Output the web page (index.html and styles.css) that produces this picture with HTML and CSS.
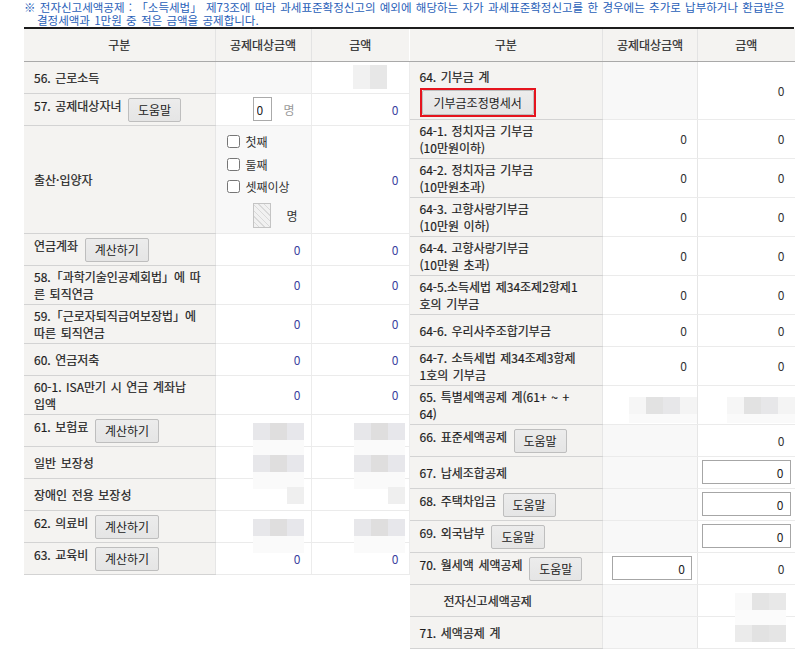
FILE: index.html
```html
<!DOCTYPE html>
<html lang="ko">
<head>
<meta charset="utf-8">
<title>세액공제</title>
<link rel="stylesheet" href="styles.css">
</head>
<body>
<p class="note">※ 전자신고세액공제 : 「소득세법」 제73조에 따라 과세표준확정신고의 예외에 해당하는 자가 과세표준확정신고를 한 경우에는 추가로 납부하거나 환급받은<br>결정세액과 1만원 중 적은 금액을 공제합니다.</p>
<div class="tables">
  <table class="grid left">
    <colgroup><col class="c1"><col class="c2"><col class="c3"></colgroup>
    <thead>
      <tr><th>구분</th><th>공제대상금액</th><th>금액</th></tr>
    </thead>
    <tbody>
      <tr><td class="lb">56. 근로소득</td><td class="v off"></td><td class="v pz-a"><span class="mz mz-a"></span></td></tr>
      <tr><td class="lb">57. 공제대상자녀 <button class="btn">도움말</button></td><td class="v cnt"><input class="num" value="0"><span class="unit">명</span></td><td class="v n">0</td></tr>
      <tr>
        <td class="lb">출산·입양자</td>
        <td class="v off chk">
          <label class="ck"><input type="checkbox">첫째</label>
          <label class="ck ck2"><input type="checkbox">둘째</label>
          <label class="ck"><input type="checkbox">셋째이상</label>
          <div class="hatch-row"><span class="hatch"></span><span class="unit2">명</span></div>
        </td>
        <td class="v n">0</td>
      </tr>
      <tr><td class="lb">연금계좌 <button class="btn">계산하기</button></td><td class="v n">0</td><td class="v n">0</td></tr>
      <tr><td class="lb">58.「과학기술인공제회법」에 따<br>른 퇴직연금</td><td class="v n">0</td><td class="v n">0</td></tr>
      <tr><td class="lb">59.「근로자퇴직급여보장법」에<br>따른 퇴직연금</td><td class="v n">0</td><td class="v n">0</td></tr>
      <tr><td class="lb">60. 연금저축</td><td class="v n">0</td><td class="v n">0</td></tr>
      <tr><td class="lb">60-1. ISA만기 시 연금 계좌납<br>입액</td><td class="v n">0</td><td class="v n">0</td></tr>
      <tr><td class="lb">61. 보험료 <button class="btn">계산하기</button></td><td class="v pz-b"><span class="mz mz-b"></span></td><td class="v pz-c"><span class="mz mz-b"></span></td></tr>
      <tr><td class="lb">일반 보장성</td><td class="v pz-b"><span class="mz mz-b"></span></td><td class="v pz-c"><span class="mz mz-b"></span></td></tr>
      <tr><td class="lb">장애인 전용 보장성</td><td class="v pz-b"><span class="mz mz-c"></span></td><td class="v pz-c"><span class="mz mz-c"></span></td></tr>
      <tr><td class="lb">62. 의료비 <button class="btn">계산하기</button></td><td class="v pz-b"><span class="mz mz-b"></span></td><td class="v pz-c"><span class="mz mz-b"></span></td></tr>
      <tr><td class="lb">63. 교육비 <button class="btn">계산하기</button></td><td class="v n">0</td><td class="v n">0</td></tr>
    </tbody>
  </table>

  <table class="grid right">
    <colgroup><col class="r1"><col class="r2"><col class="r3"></colgroup>
    <thead>
      <tr><th>구분</th><th>공제대상금액</th><th>금액</th></tr>
    </thead>
    <tbody>
      <tr><td class="lb lb-top">64. 기부금 계<br><span class="mark"><button class="btn btn-in">기부금조정명세서</button></span></td><td class="v off"></td><td class="v">0</td></tr>
      <tr><td class="lb">64-1. 정치자금 기부금<br>(10만원이하)</td><td class="v">0</td><td class="v">0</td></tr>
      <tr><td class="lb">64-2. 정치자금 기부금<br>(10만원초과)</td><td class="v">0</td><td class="v">0</td></tr>
      <tr><td class="lb">64-3. 고향사랑기부금<br>(10만원 이하)</td><td class="v">0</td><td class="v">0</td></tr>
      <tr><td class="lb">64-4. 고향사랑기부금<br>(10만원 초과)</td><td class="v">0</td><td class="v">0</td></tr>
      <tr><td class="lb">64-5.소득세법 제34조제2항제1<br>호의 기부금</td><td class="v">0</td><td class="v">0</td></tr>
      <tr><td class="lb">64-6. 우리사주조합기부금</td><td class="v">0</td><td class="v">0</td></tr>
      <tr><td class="lb">64-7. 소득세법 제34조제3항제<br>1호의 기부금</td><td class="v">0</td><td class="v">0</td></tr>
      <tr><td class="lb">65. 특별세액공제 계(61+ ~ +<br>64)</td><td class="v pz-0"><span class="mz mz-d"></span></td><td class="v pz-0"><span class="mz mz-d"></span></td></tr>
      <tr><td class="lb">66. 표준세액공제 <button class="btn">도움말</button></td><td class="v off"></td><td class="v">0</td></tr>
      <tr><td class="lb">67. 납세조합공제</td><td class="v off"></td><td class="v fld"><input class="amt" value="0"></td></tr>
      <tr><td class="lb">68. 주택차입금 <button class="btn">도움말</button></td><td class="v off"></td><td class="v fld"><input class="amt" value="0"></td></tr>
      <tr><td class="lb">69. 외국납부 <button class="btn">도움말</button></td><td class="v off"></td><td class="v fld"><input class="amt" value="0"></td></tr>
      <tr><td class="lb">70. 월세액 세액공제 <button class="btn">도움말</button></td><td class="v fld2"><input class="amt amt-s" value="0"></td><td class="v">0</td></tr>
      <tr><td class="lb sub">전자신고세액공제</td><td class="v off"></td><td class="v pz-e"><span class="mz mz-e"></span></td></tr>
      <tr><td class="lb">71. 세액공제 계</td><td class="v off"></td><td class="v pz-e"><span class="mz mz-f"></span></td></tr>
    </tbody>
  </table>
</div>
</body>
</html>
```

FILE: styles.css
```css
* { box-sizing: border-box; }

body {
  margin: 0;
  padding: 0 15px 0 24px;
  font-family: "Noto Sans CJK KR", "Noto Sans", sans-serif;
  font-size: 12px;
  color: #222;
  background: #fff;
}

.note {
  margin: 0;
  height: 27px;
  padding-top: 1px;
  font-size: 11.5px;
  line-height: 13px;
  word-spacing: 1.1px;
  color: #2860b8;
  padding-left: 13px;
  text-indent: -13px;
  white-space: nowrap;
}

.tables {
  display: flex;
  align-items: flex-start;
  width: 770px;
  border-top: 2px solid #1c1c1c;
}

.grid {
  width: 385px;
  border-collapse: collapse;
  table-layout: fixed;
  word-spacing: 1.2px;
}

.c1 { width: 191px; }
.c2 { width: 96px; }
.c3 { width: 98px; }
.r1 { width: 193px; }
.r2 { width: 95px; }
.r3 { width: 97px; }

.grid th {
  height: 32px;
  padding: 0;
  background: #f4f3f1;
  font-weight: normal;
  color: #2a2a2a;
  -webkit-text-stroke: 0.2px #2a2a2a;
  border-bottom: 1px solid #a9a9a9;
  border-left: 1px solid #e3e3e3;
}
.grid th:first-child { border-left: none; }

.grid tbody tr { height: 32px; }

.grid td {
  padding: 2px 10px;
  line-height: 17px;
  vertical-align: middle;
  white-space: nowrap;
}

.lb {
  background: #f4f3f1;
  border-bottom: 1px solid #d3d3d3;
  text-align: left;
  color: #1e1e1e;
  -webkit-text-stroke: 0.2px #1e1e1e;
}
.lb.sub { padding-left: 34px; }
.grid td.lb-top { padding: 6px 10px 2px; }

.v {
  text-align: right;
  background: #fff;
  border-bottom: 1px solid #ebebeb;
  border-left: 1px solid #e6e6e6;
  color: #333;
}
.left .v { border-right: 1px solid #ececec; }
.v.n { color: #3a3f9e; }
.v.off { background: #f8f8f8; }

.btn {
  font: inherit;
  font-size: 12px;
  word-spacing: normal;
  -webkit-text-stroke: 0;
  height: 24px;
  line-height: 22px;
  padding: 0 9px;
  margin: 1px 0 0 2px;
  border: 1px solid #bebebe;
  border-radius: 2px;
  background: linear-gradient(#ececec, #e5e5e5);
  color: #222;
  vertical-align: top;
}

.mark {
  display: inline-block;
  vertical-align: top;
  margin-top: 3px;
  border: 2px solid #e5141e;
}
.btn-in {
  display: block;
  height: 25px;
  line-height: 23px;
  padding: 0 11px;
  margin: 0;
}

/* 57 row count */
.grid td.cnt {
  text-align: left;
  padding: 0 0 0 37px;
}
.num {
  width: 19px;
  height: 24px;
  padding: 0 3px;
  border: 1px solid #aaa;
  font: inherit;
  font-size: 12px;
  color: #222;
  vertical-align: middle;
}
.unit {
  margin-left: 12px;
  color: #999;
  vertical-align: middle;
}

/* 출산·입양자 */
.grid td.chk {
  text-align: left;
  vertical-align: top;
  padding: 5px 0 5px 11px;
}
.ck {
  display: flex;
  align-items: center;
  height: 22px;
  color: #333;
}
.ck2 { height: 23px; }
.ck input {
  width: 13px;
  height: 13px;
  margin: 0 6px 0 0;
}
.hatch-row {
  display: flex;
  align-items: center;
  margin-top: 5px;
  padding-left: 26px;
}
.hatch {
  width: 18px;
  height: 25px;
  border: 1px solid #c4c4c4;
  background: repeating-linear-gradient(45deg, #f1f1f1 0 3px, #d9d9d9 3px 4px);
}
.unit2 {
  margin-left: 16px;
  color: #333;
}

/* right inputs */
.grid td.fld { padding: 0 4px; }
.grid td.fld2 { padding: 0 5px 0 0; }
.amt {
  display: block;
  width: 100%;
  height: 24px;
  padding: 0 6px;
  border: 1px solid #a6a6a6;
  font: inherit;
  font-size: 12px;
  color: #222;
  text-align: right;
}
.amt-s {
  width: 80px;
  margin-left: auto;
}

/* redacted mosaic patches */
.mz {
  display: inline-block;
  vertical-align: middle;
  height: 17px;
}
.mz-a {
  width: 34px;
  height: 24px;
  background: linear-gradient(90deg, #f1f1f1 0 17px, #e7e7e7 17px 34px);
}
.mz-b {
  width: 51px;
  background: linear-gradient(90deg, #e7e7ea 0 17px, #dfdede 17px 34px, #e7e7eb 34px 51px);
  box-shadow: 0 17px 0 #fafafa;
}
.mz-c {
  width: 17px;
  background: #efefef;
}
.mz-d {
  width: 68px;
  background: linear-gradient(90deg, #f6f6f6 0 17px, #e2e2e2 17px 34px, #e7e7e9 34px 51px, #f4f4f4 51px 68px);
  box-shadow: 0 9px 0 #fafafa;
}
.mz-e {
  width: 51px;
  background: linear-gradient(90deg, #f9f9f9 0 17px, #e4e4e4 17px 34px, #e8e8e8 34px 51px);
  box-shadow: 0 17px 0 #fbfbfb;
}
.mz-f {
  width: 51px;
  background: linear-gradient(90deg, #ebebeb 0 17px, #e2e2e2 17px 34px, #e5e5e5 34px 51px);
}
.grid td.pz-a { padding-right: 22px; }
.grid td.pz-b { padding-right: 7px; }
.grid td.pz-c { padding-right: 4px; }
.grid td.pz-0 { padding-right: 0; }
.grid td.pz-e { padding-right: 9px; }
```
